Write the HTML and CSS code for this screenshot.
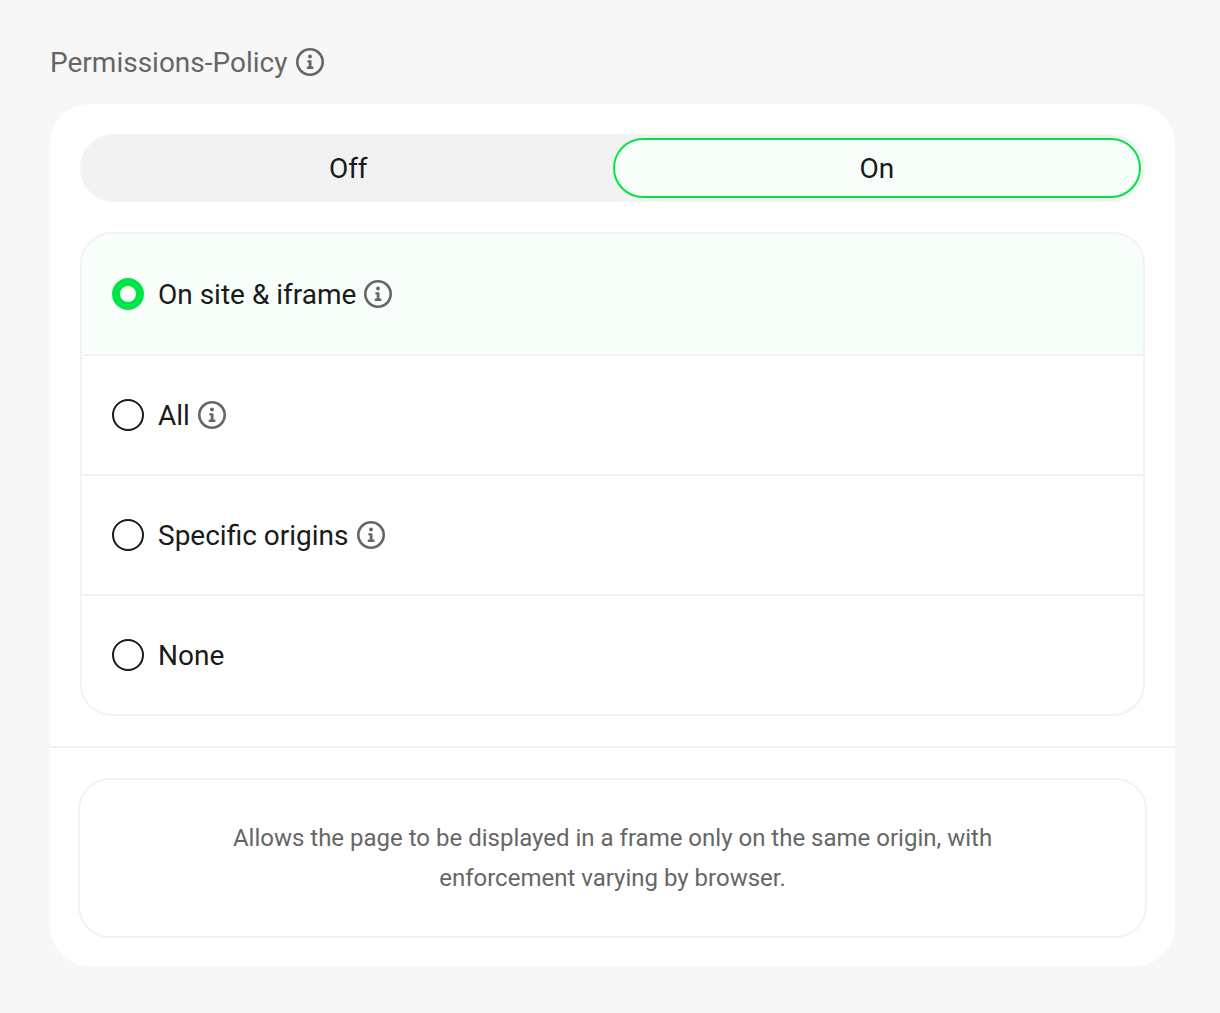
FILE: index.html
```html
<!DOCTYPE html>
<html lang="en">
<head>
<meta charset="utf-8">
<meta name="viewport" content="width=device-width, initial-scale=1">
<title>Permissions-Policy</title>
<link rel="stylesheet" href="styles.css">
</head>
<body>
<svg class="symbols" aria-hidden="true">
  <symbol id="info" viewBox="0 0 28 28">
    <circle cx="14" cy="14" r="12.7" fill="none" stroke="currentColor" stroke-width="2.6"/>
    <circle cx="14" cy="8.5" r="1.9" fill="currentColor"/>
    <path d="M12.2 12.2H14.6Q15.5 12.2 15.5 13.1V18.6H16.5Q17.6 18.6 17.6 19.8T16.5 21H11.7Q10.6 21 10.6 19.8T11.7 18.6H12.7V14.4H12.2Q11.1 14.4 11.1 13.3T12.2 12.2Z" fill="currentColor"/>
  </symbol>
</svg>
<main class="page">
  <h1 class="title" id="policy-title">Permissions-Policy <svg class="info"><use href="#info"/></svg></h1>
  <section class="card" aria-labelledby="policy-title">
    <div class="settings">
      <div class="switch">
        <button class="switch-option" type="button" aria-pressed="false">Off</button>
        <button class="switch-option switch-option-active" type="button" aria-pressed="true">On</button>
      </div>
      <div class="options" role="radiogroup" aria-labelledby="policy-title">
        <label class="option"><input class="radio" type="radio" name="scope" checked><span>On site &amp; iframe</span><svg class="info"><use href="#info"/></svg></label>
        <label class="option"><input class="radio" type="radio" name="scope"><span>All</span><svg class="info"><use href="#info"/></svg></label>
        <label class="option"><input class="radio" type="radio" name="scope"><span>Specific origins</span><svg class="info"><use href="#info"/></svg></label>
        <label class="option"><input class="radio" type="radio" name="scope"><span>None</span></label>
      </div>
    </div>
    <div class="summary">
      <p class="note">Allows the page to be displayed in a frame only on the same origin, with enforcement varying by browser.</p>
    </div>
  </section>
</main>
</body>
</html>
```

FILE: styles.css
```css
* {
  box-sizing: border-box;
}

body {
  margin: 0;
  background: #f7f7f7;
  color: #1a1a1a;
  font-family: Roboto, "Liberation Sans", sans-serif;
  font-size: 28px;
}

.symbols {
  display: none;
}

.page {
  padding: 42px 45px 47px 50px;
}

.title {
  display: flex;
  align-items: center;
  gap: 8px;
  min-height: 40px;
  margin: 0 0 22px;
  color: #666;
  font-size: 28px;
  font-weight: 400;
}

.info {
  flex: none;
  width: 28px;
  height: 28px;
  color: #666;
}

.card {
  border-radius: 40px;
  background: #fff;
}

.settings {
  display: flex;
  flex-direction: column;
  gap: 30px;
  padding: 30px;
}

.switch {
  display: flex;
  padding: 4px;
  border-radius: 34px;
  background: #f2f2f2;
}

.switch-option {
  flex: 1;
  height: 60px;
  padding: 0;
  border: 2px solid transparent;
  border-radius: 30px;
  background: none;
  color: inherit;
  font: inherit;
}

.switch-option-active {
  border-color: #00e447;
  background: #f8fffb;
}

.options {
  overflow: hidden;
  border: 2px solid #f2f2f2;
  border-radius: 32px;
}

.option {
  display: flex;
  align-items: center;
  gap: 8px;
  height: 120px;
  padding: 0 30px;
  border-bottom: 2px solid #f2f2f2;
}

.option:first-child {
  height: 122px;
}

.option:last-child {
  height: 118px;
  border-bottom: 0;
}

.option:has(:checked) {
  background: #f8fffb;
}

.radio {
  appearance: none;
  flex: none;
  width: 32px;
  height: 32px;
  margin: 0 6px 0 0;
  border: 2px solid #1a1a1a;
  border-radius: 50%;
  background: #fff;
}

.radio:checked {
  border: 8px solid #00e447;
}

.summary {
  padding: 30px 28px 28px;
  border-top: 2px solid #f2f2f2;
}

.note {
  margin: 0;
  padding: 38px 120px;
  border: 2px solid #f2f2f2;
  border-radius: 32px;
  color: #666;
  font-size: 24px;
  line-height: 40px;
  text-align: center;
}
```
